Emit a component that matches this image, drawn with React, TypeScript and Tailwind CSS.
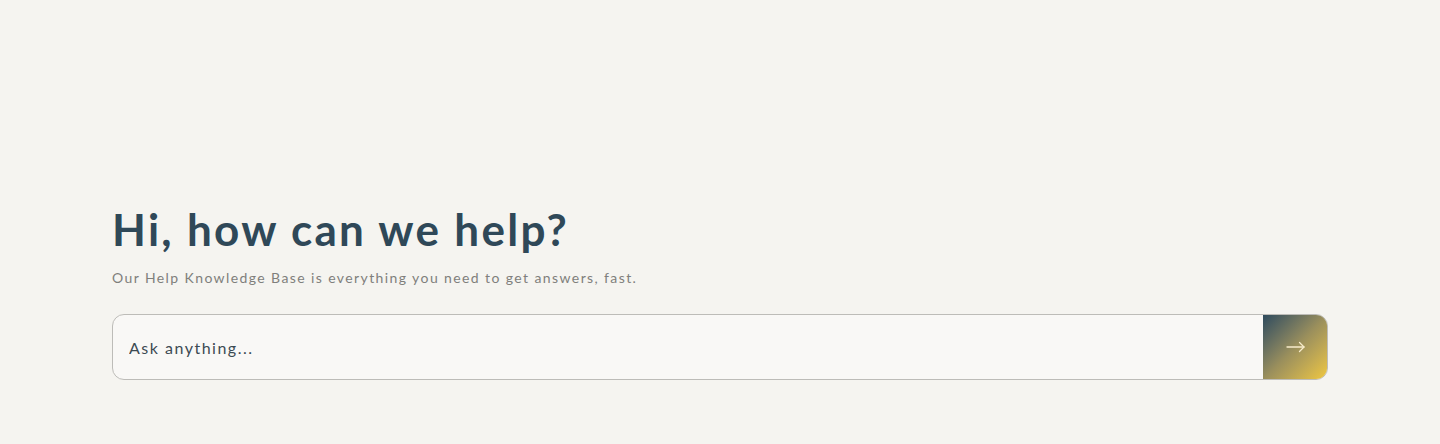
export default function App() {
  return (
    <div className="min-h-[444px] w-full bg-[#f5f4f0] font-['Lato','Noto_Sans',sans-serif]">
      <div className="px-[112px] pt-[203px] pb-[64px]">
        <h1 className="text-[44px] font-bold leading-[53px] tracking-[2.3px] text-[#2f4858]">
          Hi, how can we help?
        </h1>
        <p className="mt-[12px] text-[14px] leading-[20px] tracking-[1.4px] text-[#7f7f7c]">
          Our Help Knowledge Base is everything you need to get answers, fast.
        </p>
        <form className="mt-[26px] flex h-[66px] w-full overflow-hidden rounded-[12px] border border-[#bdbcb8] bg-[#f9f8f6]">
          <input
            type="text"
            placeholder="Ask anything..."
            className="min-w-0 flex-1 bg-transparent px-[16px] pt-[1px] text-[16px] tracking-[1.5px] text-[#2f4858] outline-none placeholder:text-[#3c4a52]"
          />
          <button
            type="button"
            className="-my-px -mr-px flex w-[65px] items-center justify-center rounded-r-[12px] bg-gradient-to-br from-[#2d4a5d] via-[#9a8f5c] to-[#f2c93a] text-[#f7eccb]"
          >
            <svg width="20" height="12" viewBox="0 0 20 12" fill="none" stroke="currentColor" strokeWidth="1.3" strokeLinecap="round" strokeLinejoin="round">
              <path d="M1 6h17" />
              <path d="M13.5 1.5L18 6l-4.5 4.5" />
            </svg>
          </button>
        </form>
      </div>
    </div>
  );
}
